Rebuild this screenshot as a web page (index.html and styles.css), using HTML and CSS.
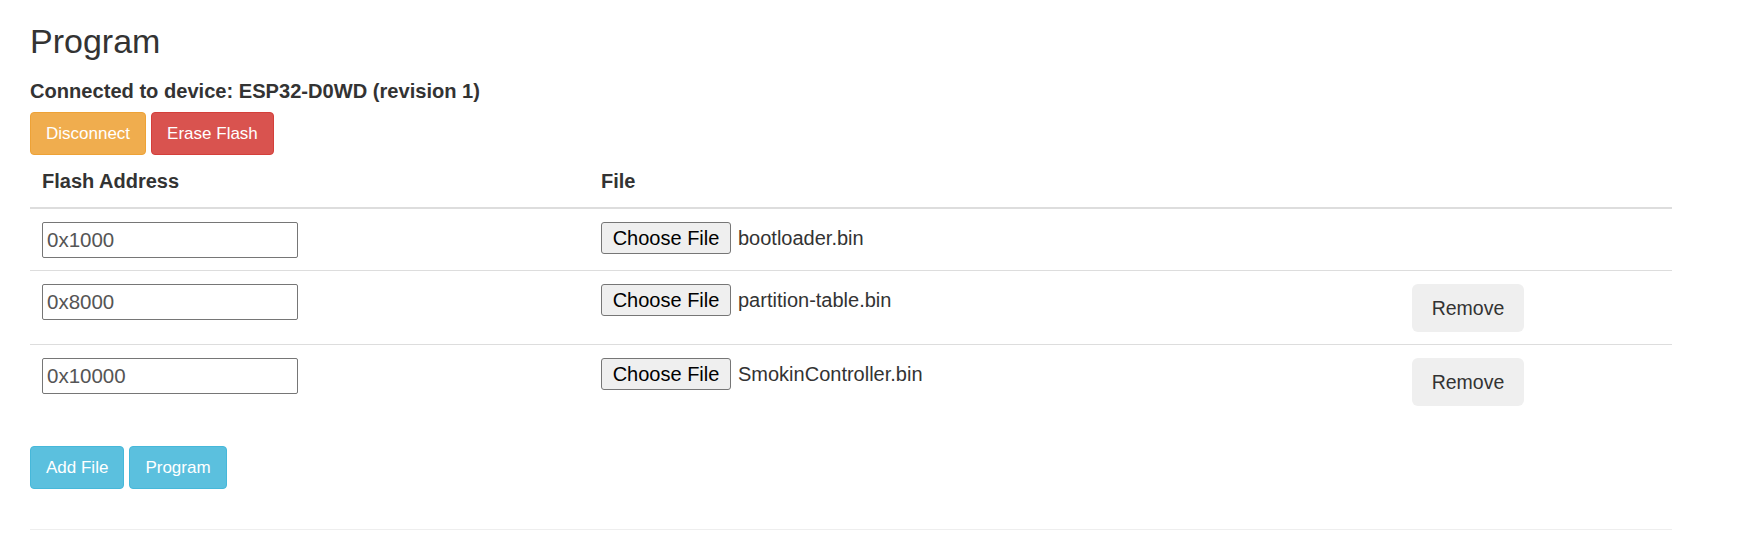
FILE: index.html
```html
<!DOCTYPE html>
<html lang="en">
<head>
<meta charset="utf-8">
<title>Program</title>
<link rel="stylesheet" href="styles.css">
</head>
<body>
<div class="page">
  <h2 class="title">Program</h2>
  <p class="connected">Connected to device: ESP32-D0WD (revision 1)</p>
  <div class="actions top-actions">
    <button class="btn btn-warning">Disconnect</button>
    <button class="btn btn-danger">Erase Flash</button>
  </div>
  <table class="files">
    <colgroup>
      <col class="col-addr">
      <col class="col-file">
      <col class="col-remove">
    </colgroup>
    <thead>
      <tr><th>Flash Address</th><th>File</th><th></th></tr>
    </thead>
    <tbody>
      <tr>
        <td><input class="addr" type="text" value="0x1000"></td>
        <td><div class="file-pick"><button class="choose">Choose File</button><span class="fname">bootloader.bin</span></div></td>
        <td></td>
      </tr>
      <tr>
        <td><input class="addr" type="text" value="0x8000"></td>
        <td><div class="file-pick"><button class="choose">Choose File</button><span class="fname">partition-table.bin</span></div></td>
        <td><button class="btn-remove">Remove</button></td>
      </tr>
      <tr>
        <td><input class="addr" type="text" value="0x10000"></td>
        <td><div class="file-pick"><button class="choose">Choose File</button><span class="fname">SmokinController.bin</span></div></td>
        <td><button class="btn-remove">Remove</button></td>
      </tr>
    </tbody>
  </table>
  <div class="actions bottom-actions">
    <button class="btn btn-info">Add File</button>
    <button class="btn btn-info">Program</button>
  </div>
  <hr class="divider">
</div>
</body>
</html>
```

FILE: styles.css
```css
* { box-sizing: border-box; }

html, body {
  margin: 0;
  padding: 0;
  background: #ffffff;
}

body {
  font-family: "Liberation Sans", Arial, Helvetica, sans-serif;
  color: #333333;
  font-size: 19.5px;
  line-height: 28px;
}

.page {
  padding-left: 30px;
  width: 1672px;
}

.title {
  margin: 22px 0 17px;
  font-size: 34px;
  line-height: 38px;
  font-weight: 400;
  color: #333333;
}

.connected {
  margin: 0;
  font-weight: 700;
  font-size: 20.1px;
  line-height: 28px;
  color: #333333;
}

.actions {
  display: flex;
  gap: 5px;
}

.top-actions { margin-top: 7px; }
.bottom-actions { margin-top: 28px; }

.btn {
  font-family: inherit;
  font-size: 17px;
  line-height: 25px;
  padding: 8px 15px;
  border: 1px solid transparent;
  border-radius: 4px;
  color: #ffffff;
  cursor: pointer;
}

.btn-warning { background: #f0ad4e; border-color: #eea236; }
.btn-danger { background: #d9534f; border-color: #d43f3a; }
.btn-info { background: #5bc0de; border-color: #46b8da; }

.files {
  width: 1642px;
  border-collapse: collapse;
  table-layout: fixed;
}

.col-addr { width: 559px; }
.col-file { width: 811px; }
.col-remove { width: 272px; }

.files th {
  text-align: left;
  font-weight: 700;
  font-size: 20px;
  padding: 12px;
  line-height: 28px;
  border-bottom: 2px solid #dddddd;
  vertical-align: bottom;
}

.files td {
  padding: 13px 12px 12px;
  vertical-align: top;
  border-top: 1px solid #dddddd;
}

.files tbody tr:first-child td { border-top: 0; }

.addr {
  display: block;
  width: 256px;
  height: 36px;
  margin: 0;
  padding: 0 4px;
  border: 1px solid #767676;
  border-radius: 2px;
  font-family: "Liberation Sans", Arial, sans-serif;
  font-size: 20.5px;
  color: #555555;
  background: #ffffff;
}

.file-pick {
  display: flex;
  align-items: center;
  height: 32px;
}

.choose {
  height: 32px;
  width: 130px;
  padding: 0;
  margin: 0;
  border: 1px solid #767676;
  border-radius: 3px;
  background: #efefef;
  color: #000000;
  font-family: "Liberation Sans", Arial, sans-serif;
  font-size: 20px;
  line-height: 30px;
}

.fname {
  margin-left: 7px;
  font-size: 20px;
  color: #333333;
}

.btn-remove {
  height: 48px;
  width: 112px;
  padding: 0;
  border: 0;
  border-radius: 6px;
  background: #efefef;
  color: #333333;
  font-family: "Liberation Sans", Arial, sans-serif;
  font-size: 19.5px;
}

.divider {
  margin: 40px 0 0;
  width: 1642px;
  border: 0;
  border-top: 1px solid #eeeeee;
  height: 0;
}
```
